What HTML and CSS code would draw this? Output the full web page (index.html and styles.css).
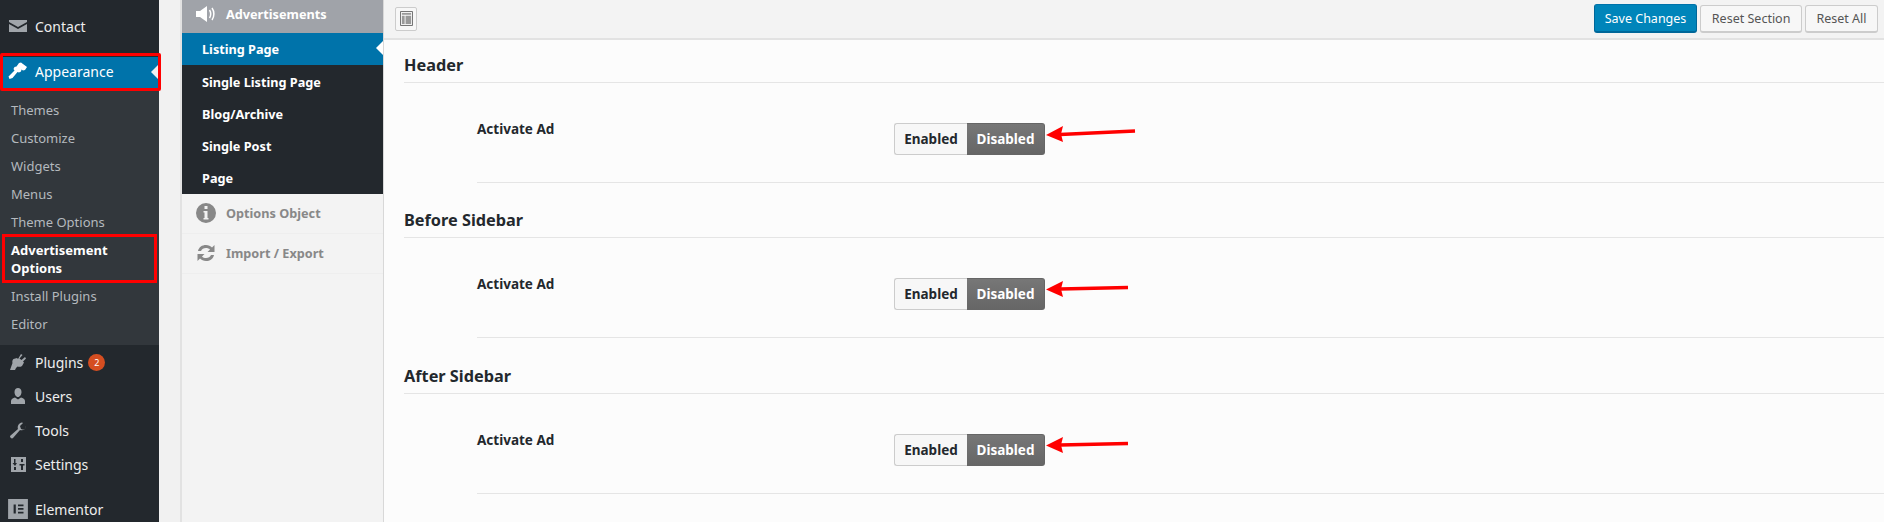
FILE: index.html
```html
<!DOCTYPE html>
<html lang="en">
<head>
<meta charset="utf-8">
<title>Advertisement Options</title>
<link rel="stylesheet" href="styles.css">
</head>
<body>
<div class="page">
  <nav class="wp-menu">
    <a class="wp-item wp-contact"><svg class="wp-icon" viewBox="0 0 20 20"><path d="M1 4h18v2l-9 5-9-5zM1 8l9 5 9-5v8H1z"/></svg>Contact</a>
    <a class="wp-item wp-current"><svg class="wp-icon" viewBox="0 0 20 20"><path d="M11 2l2-.5 6 4.500-2 3-2 .5-1.500-1 -.5 2-2 1-1.500-.5-5 6-3 1-1-2.500 6-6-1-1.500 1-2 2-.5z"/></svg>Appearance</a>
    <ul class="wp-sub">
      <li class="wp-sub-item">Themes</li>
      <li class="wp-sub-item">Customize</li>
      <li class="wp-sub-item">Widgets</li>
      <li class="wp-sub-item">Menus</li>
      <li class="wp-sub-item">Theme Options</li>
      <li class="wp-sub-item wp-sub-active">Advertisement<br>Options</li>
      <li class="wp-sub-item">Install Plugins</li>
      <li class="wp-sub-item">Editor</li>
    </ul>
    <a class="wp-item"><svg class="wp-icon" viewBox="0 0 20 20"><path d="M13 2l1.500 1-3 3.500 2 1.500 3.500-3 1 1.500-3 3 1 1-2 3.500c-1.500 1-3 1-4.500.5L8 16l-1 2H2l2.500-7c-.5-1.500 0-3 1-4l3.500-1 1 1z"/></svg>Plugins<span class="badge">2</span></a>
    <a class="wp-item"><svg class="wp-icon" viewBox="0 0 20 20"><path d="M10 2c2 0 3.500 1.500 3.500 4S12 11 10 11 6.500 8.500 6.500 6 8 2 10 2zM3 18v-3c0-2 2-3 4-3.500l3 2 3-2c2 .5 4 1.500 4 3.500v3z"/></svg>Users</a>
    <a class="wp-item"><svg class="wp-icon" viewBox="0 0 20 20"><path d="M18 6c0 3-3 5-6 4l-7 8c-1 1-3 0-3-2l8-7c-1-3 1-6 4-6.500l1 .5-3 3 1 3 3 1 2-3z"/></svg>Tools</a>
    <a class="wp-item"><svg class="wp-icon" viewBox="0 0 20 20"><path fill-rule="evenodd" d="M3 3h15v15H3zM6 5v4H4.500L7 12l2-3H7.500V5zm0 8v3h2v-3zm7-8v3h2V5zm-1.500 5v1.500H13V16h2v-4.500h1.500V10z"/></svg>Settings</a>
    <a class="wp-item wp-elementor"><svg class="wp-icon wp-icon-large" viewBox="0 0 20 20"><path fill-rule="evenodd" d="M1 1h18v18H1zM6 6v8h2V6zm4 0v1.500h5V6zm0 3.200v1.500h5V9.200zm0 3.300V14h5v-1.500z"/></svg>Elementor</a>
  </nav>

  <div class="content">
    <aside class="panel-menu">
      <div class="group-head"><svg class="group-icon" viewBox="0 0 22 22"><path d="M1 8h4l7-5v16l-7-5H1z"/><path class="sound" d="M14.500 7c1.500 2.500 1.500 5.500 0 8M17 5c2.500 3.500 2.500 8.500 0 12"/></svg>Advertisements</div>
      <ul class="group-list">
        <li class="group-item group-active">Listing Page</li>
        <li class="group-item">Single Listing Page</li>
        <li class="group-item">Blog/Archive</li>
        <li class="group-item">Single Post</li>
        <li class="group-item">Page</li>
      </ul>
      <div class="panel-link"><svg class="group-icon" viewBox="0 0 22 22"><path fill-rule="evenodd" d="M11 1a10 10 0 1 1 0 20 10 10 0 0 1 0-20zM9.500 4v3h3V4zM8.500 9v1.500h1V16h-1v1.500h5V16h-1V9z"/></svg>Options Object</div>
      <div class="panel-link"><svg class="group-icon" viewBox="0 0 22 22"><path d="M3 9c1-4 4-6 8-6 2.500 0 4.500 1 6 2.500L19.500 3v7h-7l2.500-2.500C14 6.500 12.500 6 11 6 8.500 6 6.800 7.200 6 9zM19 13c-1 4-4 6-8 6-2.500 0-4.500-1-6-2.500L2.500 19v-7h7L7 14.500c1 1 2.500 1.500 4 1.500 2.500 0 4.200-1.200 5-3z"/></svg>Import / Export</div>
    </aside>

    <main class="options">
      <header class="toolbar">
        <button class="expand-btn" type="button"><svg class="expand-icon" viewBox="0 0 14 16"><path d="M.5.500h13v15H.5z" fill="none" stroke="#666"/><path d="M2 2h10v2H2zM2 5h3v9H2zM6 5h6v9H6z" fill="#999"/></svg></button>
        <div class="toolbar-actions">
          <button class="btn btn-primary" type="button">Save Changes</button>
          <button class="btn" type="button">Reset Section</button>
          <button class="btn" type="button">Reset All</button>
        </div>
      </header>

      <section class="section">
        <h2 class="section-title">Header</h2>
        <div class="field">
          <div class="field-label">Activate Ad</div>
          <div class="toggle"><span class="toggle-on">Enabled</span><span class="toggle-off">Disabled</span>
            <svg class="arrow" width="90" height="20" viewBox="0 0 90 20"><path class="arrow-line" d="M14 10.500L89 7"/><path class="arrow-head" d="M0 11L17 2l-2 8 2 8z"/></svg>
          </div>
        </div>
      </section>
      <section class="section">
        <h2 class="section-title">Before Sidebar</h2>
        <div class="field">
          <div class="field-label">Activate Ad</div>
          <div class="toggle"><span class="toggle-on">Enabled</span><span class="toggle-off">Disabled</span>
            <svg class="arrow" width="83" height="20" viewBox="0 0 83 20"><path class="arrow-line" d="M14 10L82 8.500"/><path class="arrow-head" d="M0 10.500L17 2l-2 8 2 8z"/></svg>
          </div>
        </div>
      </section>
      <section class="section">
        <h2 class="section-title">After Sidebar</h2>
        <div class="field">
          <div class="field-label">Activate Ad</div>
          <div class="toggle"><span class="toggle-on">Enabled</span><span class="toggle-off">Disabled</span>
            <svg class="arrow" width="83" height="20" viewBox="0 0 83 20"><path class="arrow-line" d="M14 10L82 8.500"/><path class="arrow-head" d="M0 10.500L17 2l-2 8 2 8z"/></svg>
          </div>
        </div>
      </section>
    </main>
  </div>
</div>
</body>
</html>
```
FILE: styles.css
```css
* { box-sizing: border-box; }
html, body { margin: 0; padding: 0; height: 522px; overflow: hidden; }
body { font-family: "Noto Sans", "Open Sans", sans-serif; background: #f1f1f1; color: #23282d; }
ul { margin: 0; padding: 0; list-style: none; }

.page { display: grid; grid-template-columns: 159px 1fr; height: 522px; overflow: hidden; }

/* WordPress admin menu */
.wp-menu { background: #23282d; padding-top: 9px; height: 522px; position: relative; z-index: 1; }
.wp-item { display: flex; align-items: center; height: 34px; padding-left: 35px; position: relative; color: #eee; font-size: 14px; }
.wp-icon { position: absolute; left: 8px; top: 7px; width: 20px; height: 20px; fill: #a0a5aa; }
.wp-icon-large { left: 7px; top: 6px; width: 22px; height: 22px; }
.wp-contact { margin-bottom: 14px; }
.wp-current { height: 31px; padding-bottom: 2px; background: #0073aa; color: #fff; }
.wp-current .wp-icon { top: 4px; fill: #fff; }
.wp-current::before { content: ""; position: absolute; right: 0; top: 7px; border: 8px solid transparent; border-right-color: #f1f1f1; border-left: 0; }
.wp-current::after { content: ""; position: absolute; left: 0; right: -2px; top: -4px; bottom: -3px; border: 3.500px solid #f00; border-radius: 2px; }
.wp-sub { background: #32373c; padding: 8px 0 7px; }
.wp-sub-item { padding: 5px 11px; font-size: 13px; line-height: 18px; color: #b4b9be; position: relative; }
.wp-sub-active { font-weight: 700; color: #fff; }
.wp-sub-active::after { content: ""; position: absolute; left: 2px; right: 2px; top: -2px; bottom: -1px; border: 3px solid #f00; }
.badge { display: inline-flex; align-items: center; justify-content: center; width: 17px; height: 17px; margin-left: 5px; border-radius: 50%; background: #d54e21; color: #fff; font-size: 9px; }
.wp-elementor { margin-top: 11px; }

/* Layout right of the admin menu */
.content { display: grid; grid-template-columns: 202px 1fr; margin-left: 21px; height: 522px; border-left: 2px solid #e2e2e2; }

/* Options panel menu */
.panel-menu { background: #f3f3f3; border-right: 1px solid #d8d8d8; font-size: 12.700px; font-weight: 700; }
.group-head { display: flex; align-items: center; height: 33px; padding: 0 0 5px 44px; position: relative; background: #a0a3a9; color: #fff; }
.group-icon { position: absolute; left: 13px; top: 3px; width: 22px; height: 22px; fill: #fff; }
.sound { fill: none; stroke: #fff; stroke-width: 1.500; }
.group-list { background: #23282d; height: 161px; }
.group-item { display: flex; align-items: center; height: 32px; padding: 2px 0 0 20px; color: #fff; position: relative; }
.group-active { padding-top: 0; background: #0073aa; }
.group-active::after { content: ""; position: absolute; right: 0; top: 8px; border: 7px solid transparent; border-right-color: #fff; border-left: 0; }
.panel-link { display: flex; align-items: center; height: 40px; padding: 0 0 2px 44px; position: relative; color: #888; border-bottom: 1px solid #eee; }
.panel-link .group-icon { top: 8px; fill: #888; }

/* Options */
.options { background: #fcfcfc; min-width: 0; }
.toolbar { display: flex; align-items: center; justify-content: space-between; height: 40px; padding: 0 6px 1px 11px; background: #f3f3f3; border-bottom: 2px solid #e2e2e2; }
.expand-btn { display: flex; align-items: center; justify-content: center; width: 22px; height: 24px; padding: 0; background: #f7f7f7; border: 1px solid #ccc; border-radius: 2px; }
.expand-icon { width: 13px; height: 15px; }
.toolbar-actions { display: flex; align-items: center; gap: 3px; }
.btn { height: 28px; padding: 0 10.500px; background: #f7f7f7; color: #555; border: 1px solid #ccc; border-bottom-width: 2px; border-radius: 3px; font: 12.500px "Noto Sans", sans-serif; }
.btn-primary { height: 29px; padding: 0 10px; background: #0085ba; color: #fff; border-color: #0073aa #006799 #006799; }

.section { padding: 24px 0 0 20px; height: 155px; }
.section:first-of-type { padding-top: 12px; height: 143px; }
.section:last-of-type { padding-top: 25px; height: 157px; }
.section-title { margin: 0; height: 31px; border-bottom: 1px solid #e5e5e5; font-size: 16.300px; line-height: 27px; font-weight: 700; color: #23282d; }
.field { display: flex; align-items: flex-start; height: 100px; margin-left: 73px; padding-top: 40px; border-bottom: 1px solid #e5e5e5; }
.field-label { width: 417px; margin-top: -4px; font-size: 13.500px; font-weight: 700; line-height: 20px; color: #23282d; }
.toggle { display: flex; height: 32px; position: relative; font-size: 13.500px; font-weight: 700; line-height: 30px; text-align: center; }
.toggle-on { width: 73px; background: #f7f7f7; border: 1px solid #ccc; border-right: 0; border-radius: 3px 0 0 3px; color: #23282d; }
.toggle-off { width: 78px; background: linear-gradient(#777, #666); border: 1px solid #666; border-left: 0; border-radius: 0 3px 3px 0; color: #fff; }
.arrow { position: absolute; left: 152px; top: 1px; }
.arrow-line { fill: none; stroke: #f00; stroke-width: 3.500; }
.arrow-head { fill: #f00; }
```
